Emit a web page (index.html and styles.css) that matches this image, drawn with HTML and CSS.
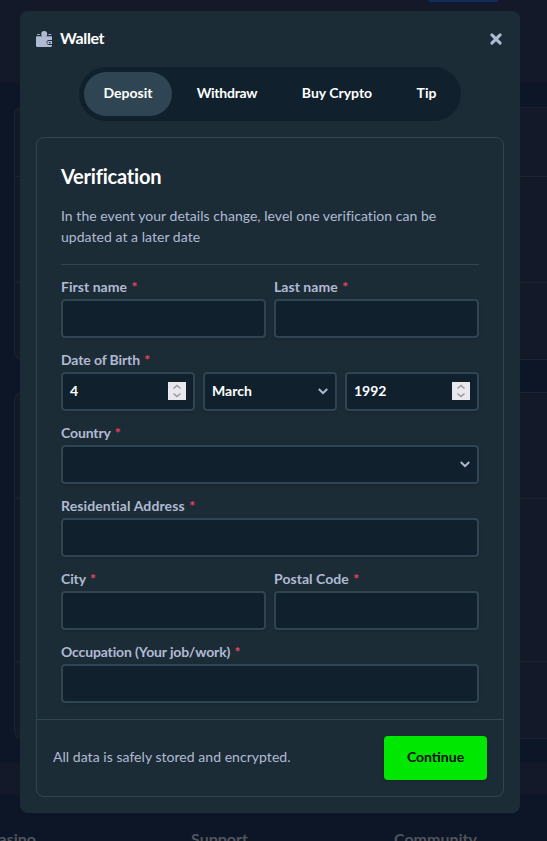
FILE: index.html
```html
<!DOCTYPE html>
<html lang="en">
<head>
<meta charset="utf-8">
<title>Wallet</title>
<link rel="stylesheet" href="styles.css">
</head>
<body>
<div class="page">
  <div class="topbar"><div class="topbar-button"></div></div>
  <div class="page-content">
    <div class="panel"><div class="row r1"></div><div class="row r2"></div><div class="row r3"></div></div>
    <div class="panel"><div class="row r2"></div><div class="row r4"></div><div class="row r3"></div></div>
  </div>
  <div class="band"></div>
  <footer class="footer"><span>Casino</span><span>Support</span><span>Community</span></footer>
</div>

<main class="modal">
  <header class="modal-header">
    <svg class="wallet-icon" viewBox="0 0 16 16"><circle cx="8.2" cy="3" r="3"/><path d="M0 5.800l.4-.6h15.300l.3.6V9h-3a2.500 2.500 0 0 0 0 5h3v.5c0 .9-.6 1.500-1.500 1.500h-13C.6 16 0 15.400 0 14.500zM1.500 3h2.300v1H.9zM12.500 3h2.300l.8 1h-3.100z"/><path fill-rule="evenodd" d="M12.600 10H16v3h-3.400a1.500 1.500 0 0 1 0-3zm.4 1v1.200h1.500V11z"/></svg>
    <h1 class="modal-title">Wallet</h1>
    <svg class="close-icon" viewBox="0 0 12 12"><path d="M1.900 1.900l8.200 8.200M10.100 1.900l-8.200 8.200"/></svg>
  </header>
  <nav class="tabs">
    <a class="tab active">Deposit</a>
    <a class="tab withdraw">Withdraw</a>
    <a class="tab buy">Buy Crypto</a>
    <a class="tab tip">Tip</a>
  </nav>
  <section class="card">
    <div class="card-body">
      <h2 class="heading">Verification</h2>
      <p class="intro">In the event your details change, level one verification can be<br>updated at a later date</p>
      <div class="columns two">
        <div class="field"><div class="label">First name <i>*</i></div><div class="input"></div></div>
        <div class="field"><div class="label">Last name <i>*</i></div><div class="input"></div></div>
      </div>
      <div class="field">
        <div class="label birth">Date of Birth <i>*</i></div>
        <div class="columns three">
          <div class="input number">4<svg class="spinner" viewBox="0 0 18 18"><path d="M5.500 6.500L9 3.500l3.500 3M5.500 11.500l3.500 3 3.500-3"/></svg></div>
          <div class="input">March<svg class="chevron" viewBox="0 0 10 7"><path d="M.8 1L5 5.200 9.200 1"/></svg></div>
          <div class="input number">1992<svg class="spinner" viewBox="0 0 18 18"><path d="M5.500 6.500L9 3.500l3.500 3M5.500 11.500l3.500 3 3.500-3"/></svg></div>
        </div>
      </div>
      <div class="field"><div class="label birth">Country <i>*</i></div><div class="input"><svg class="chevron" viewBox="0 0 10 7"><path d="M.8 1L5 5.200 9.200 1"/></svg></div></div>
      <div class="field"><div class="label address">Residential Address <i>*</i></div><div class="input"></div></div>
      <div class="columns two">
        <div class="field"><div class="label birth">City <i>*</i></div><div class="input"></div></div>
        <div class="field"><div class="label">Postal Code <i>*</i></div><div class="input"></div></div>
      </div>
      <div class="field"><div class="label occupation">Occupation (Your job/work) <i>*</i></div><div class="input"></div></div>
    </div>
    <div class="card-footer"><span class="note">All data is safely stored and encrypted.</span><button class="continue">Continue</button></div>
  </section>
</main>
</body>
</html>
```
FILE: styles.css
```css
* { box-sizing: border-box; }
body {
  margin: 0;
  height: 841px;
  overflow: hidden;
  position: relative;
  background: #0d1626;
  color: #fff;
  font: 14px/21px Lato, "Open Sans", sans-serif;
  font-variant-ligatures: none;
}
h1, h2, p { margin: 0; }
.page { height: 841px; overflow: hidden; }
.topbar { height: 83px; background: #131928; padding-left: 428px; }
.topbar-button { width: 70px; height: 2px; background: #112e5b; border-radius: 0 0 3px 3px; }
.page-content { height: 680px; padding: 24px 0 0 14px; }
.panel {
  border: 1px solid #1a2431;
  border-right: 0;
  border-radius: 8px 0 0 8px;
  background: #131928;
  margin-bottom: 32px;
}
.row + .row { border-top: 1px solid #1a2431; }
.r1 { height: 68px; }
.r2 { height: 106px; }
.r3 { height: 77px; }
.r4 { height: 163px; }
.panel + .panel .r2 { height: 105px; }
.band { height: 32px; background: #131928; }
.footer { display: grid; grid-template-columns: 203px 203px 1fr; margin-left: -12px; padding-top: 33px; color: #50545f; font-weight: 700; font-size: 16px; }

.modal {
  position: absolute;
  left: 20px;
  top: 11px;
  width: 500px;
  height: 802px;
  padding: 16px;
  border-radius: 8px;
  background: #1c2c37;
}
.modal-header { display: flex; align-items: center; height: 24px; }
.wallet-icon { width: 16px; height: 16px; fill: #b1bad3; }
.modal-title { flex: 1; margin-left: 8px; padding-bottom: 2px; font-size: 16px; line-height: 22px; font-weight: 700; letter-spacing: -.35px; }
.close-icon { width: 12px; height: 12px; margin-right: 2px; fill: none; stroke: #b1bad3; stroke-width: 3; stroke-linecap: round; }
.tabs { display: flex; gap: 5px; width: 382px; height: 54px; margin: 16px auto; padding: 5px; border-radius: 27px; background: #10212d; }
.tab { display: flex; align-items: center; justify-content: center; width: 88px; padding-bottom: 3px; border-radius: 22px; font-weight: 700; white-space: nowrap; }
.tab.active { background: #2f4553; }
.tab.withdraw { width: 100px; letter-spacing: -.25px; }
.tab.buy { width: 110px; }
.tab.tip { width: 59px; }
.card { height: 660px; border: 1px solid #2f4553; border-radius: 8px; }
.card-body { height: 581px; padding: 23px 24px 0; }
.heading { font-size: 20px; line-height: 30px; font-weight: 700; letter-spacing: -.2px; }
.intro { height: 60px; margin: 14px 0 12px; color: #b1bad3; border-bottom: 1px solid #2f4553; white-space: nowrap; letter-spacing: .04px; }
.columns { display: grid; gap: 8px; }
.two { grid-template-columns: 1fr 1fr; }
.three { grid-template-columns: 1fr 1fr 1fr; }
.field { height: 73px; }
.label { height: 22px; line-height: 19px; color: #b1bad3; font-weight: 700; letter-spacing: .04px; }
.label.birth { letter-spacing: -.12px; }
.label.address { letter-spacing: .12px; }
.label.occupation { letter-spacing: -.14px; }
.label i { color: #ed4163; font-style: normal; margin-left: 1px; }
.input {
  display: flex;
  align-items: center;
  height: 39px;
  padding: 0 7px;
  border: 2px solid #2f4553;
  border-radius: 4px;
  background: #10212d;
  box-shadow: 0 1px 3px rgba(0,0,0,.2);
  font-weight: 700;
  line-height: 19px;
}
.input { padding-bottom: 2px; }
.spinner { width: 18px; height: 18px; margin-left: auto; background: #e9e9ed; fill: none; stroke: #9a99a2; stroke-width: 1.500; }
.chevron { width: 10px; height: 7px; margin: 2px 0 0 auto; fill: none; stroke: #b1bad3; stroke-width: 2; }
.card-footer { display: flex; justify-content: space-between; align-items: center; height: 77px; padding: 0 16px; border-top: 1px solid #2f4553; color: #b1bad3; }
.note { padding-bottom: 3px; letter-spacing: .04px; }
.continue { width: 103px; height: 44px; padding: 0 0 3px; border: 0; border-radius: 4px; background: #00e701; color: #05080a; font: 700 14px Lato, sans-serif; box-shadow: 0 1px 3px rgba(0,0,0,.2); }
```
